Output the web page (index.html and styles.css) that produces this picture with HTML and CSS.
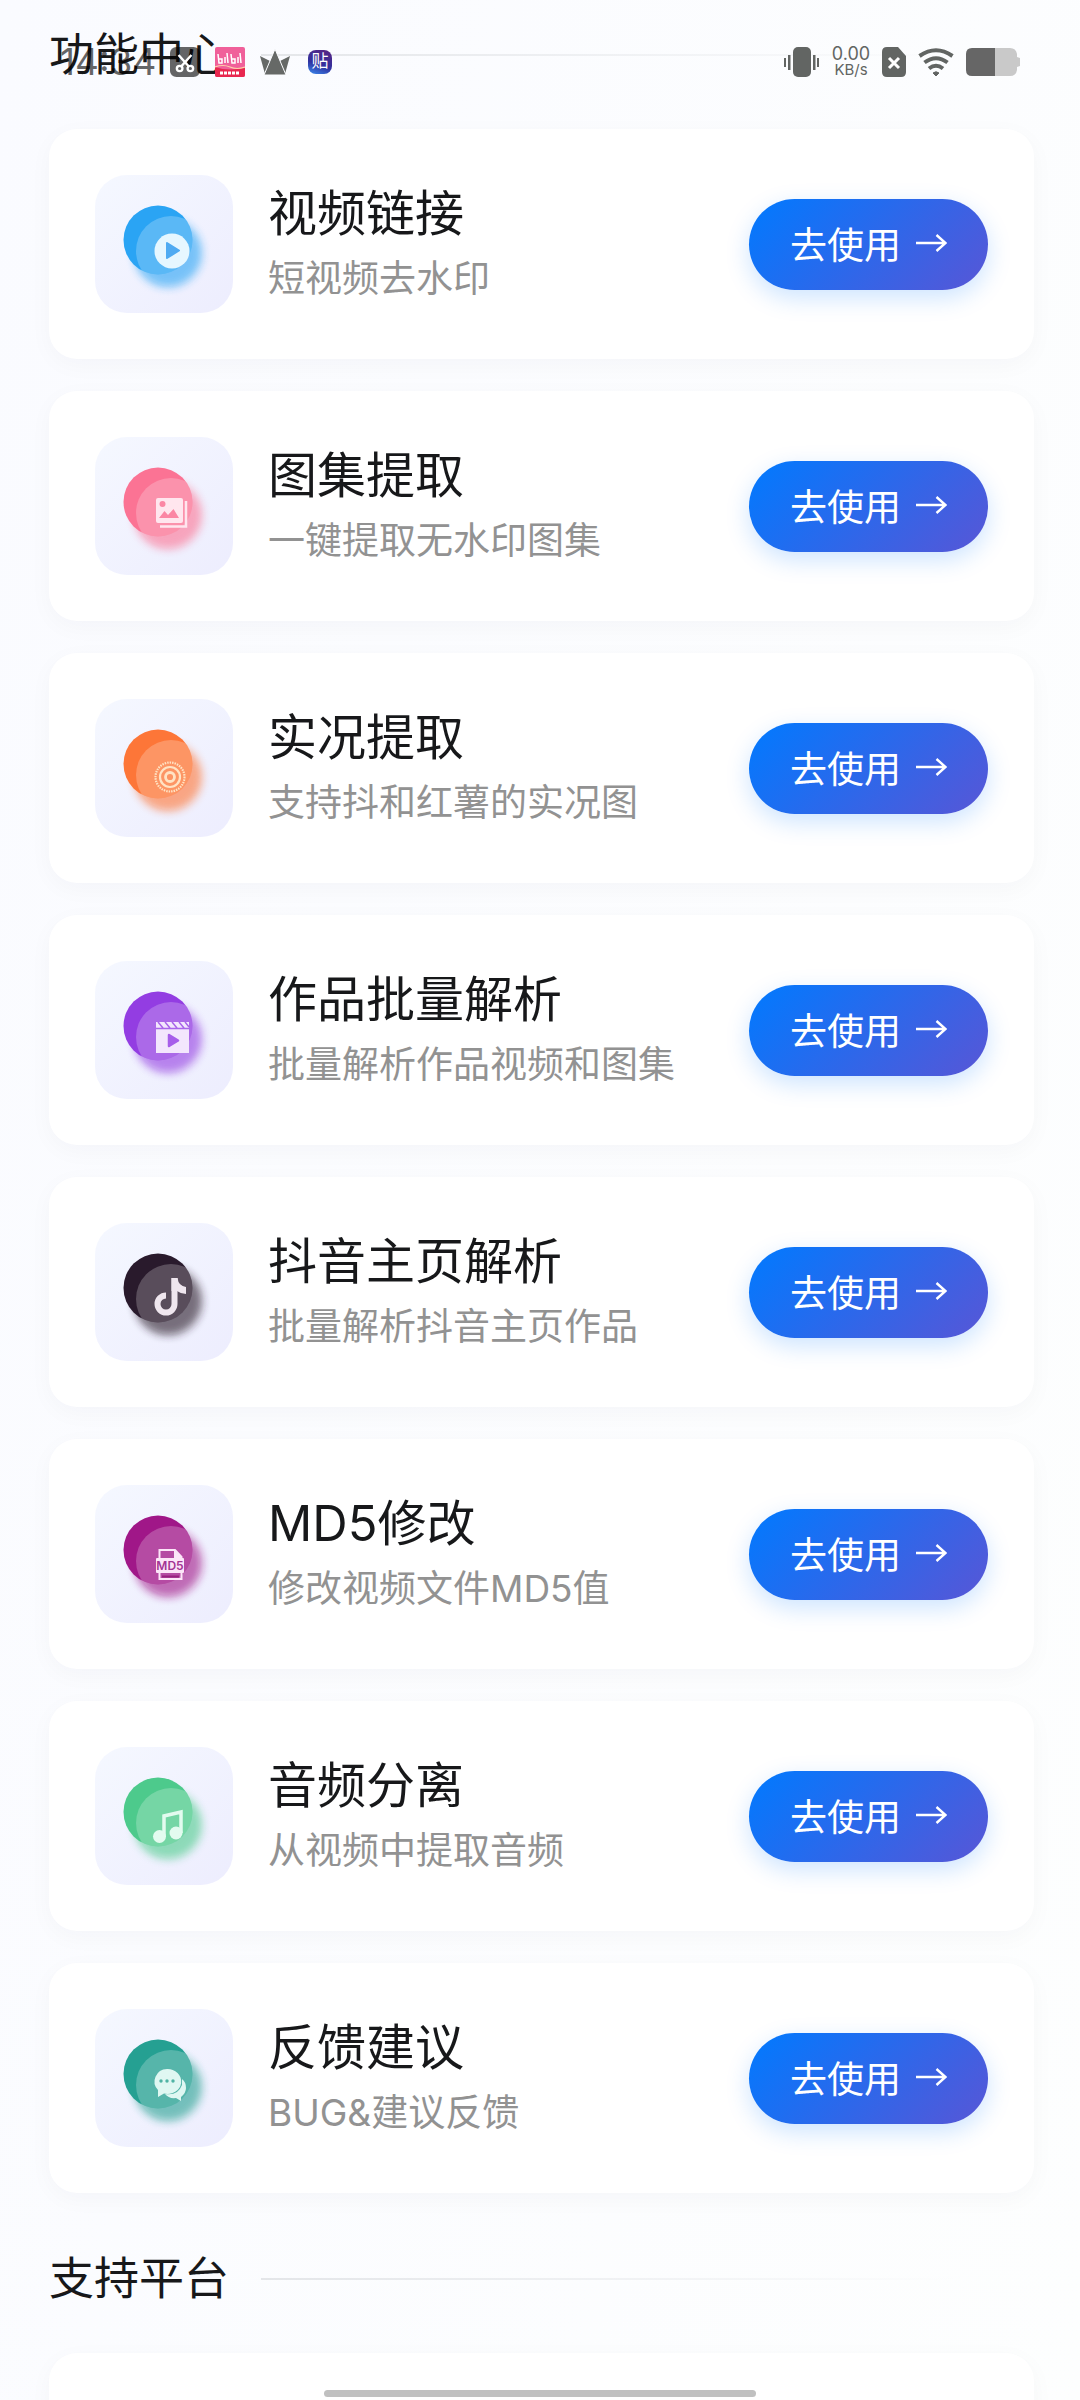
FILE: index.html
```html
<!DOCTYPE html>
<html lang="zh-CN">
  <head>
    <meta charset="UTF-8" />
    <meta name="viewport" content="width=device-width, initial-scale=1.0" />
    <title>功能中心</title>
    <link rel="stylesheet" href="styles.css">
  </head>
  <body>
    <!-- shared shapes -->
    <svg class="defs" width="0" height="0" aria-hidden="true">
      <defs>
        <filter id="soft" x="-50%" y="-50%" width="200%" height="200%">
          <feGaussianBlur stdDeviation="4" />
        </filter>
        <clipPath id="disc"><circle cx="63" cy="65" r="34.500" /></clipPath>
        <symbol id="blob" viewBox="0 0 138 138">
          <circle cx="73" cy="78" r="34" fill="currentColor" opacity="0.65" filter="url(#soft)" />
          <circle cx="63" cy="65" r="34.500" fill="currentColor" />
          <circle cx="76" cy="76" r="35" fill="#fff" opacity="0.06" />
          <circle cx="76" cy="76" r="35" fill="#fff" opacity="0.18" clip-path="url(#disc)" />
        </symbol>
        <symbol id="arrow" viewBox="0 0 32 20">
          <path d="M1 10H30M21.500 2L30.500 10L21.500 18" fill="none" stroke="#fff" stroke-width="2.400" />
        </symbol>
      </defs>
    </svg>

    <header class="status-bar">
      <div class="status-left">
        <span class="clock">14:34</span>
        <svg width="30" height="30" viewBox="0 0 28 30" preserveAspectRatio="none">
          <rect width="28" height="30" rx="6" fill="#000" opacity="0.6" />
          <g fill="none" stroke="#fff" stroke-width="2.200">
            <path d="M8 8L18 20M20 8L10 20" />
            <circle cx="9" cy="21.500" r="2.600" />
            <circle cx="19" cy="21.500" r="2.600" />
          </g>
        </svg>
        <svg width="30" height="30" viewBox="0 0 30 30">
          <rect width="30" height="30" rx="2" fill="#f0609a" />
          <path d="M0 20Q15 25 30 20V28Q30 30 28 30H2Q0 30 0 28Z" fill="#e8274f" />
          <g fill="none" stroke="#fff" stroke-width="1.500">
            <path d="M3 7L4 16H7V12H4M10 10V16M12 6L13 16M16 7L17 16H20V12H17M23 10V16M25 6L26 16" />
            <path d="M0 20Q8 17 15 20T30 20" stroke="#ffd0a8" stroke-width="1.200" />
            <path d="M5 26H25" stroke-width="3" stroke-dasharray="3 1" />
          </g>
        </svg>
        <svg class="crown" width="30" height="26" viewBox="0 0 30 26" fill="#666967">
          <path d="M0 7L10 12L5 25ZM30 7L20 12L25 25Z" />
          <path d="M15 0L26 26H4Z" stroke="#fbfcff" stroke-width="1" />
        </svg>
        <span class="tie">贴</span>
      </div>
      <div class="status-right">
        <svg width="36" height="30" viewBox="0 0 36 30" fill="#626563">
          <rect x="9" width="18" height="30" rx="5" />
          <path d="M0 11h2v9H0zM4 8h2.500v15H4zM29 8h2.500v15H29zM33 11h2v9h-2z" />
        </svg>
        <div class="speed"><span>0.00</span><span class="unit">KB/s</span></div>
        <svg width="24" height="30" viewBox="0 0 24 30">
          <path d="M5 0H16L24 9V25Q24 30 19 30H5Q0 30 0 25V5Q0 0 5 0Z" fill="#626563" />
          <path d="M7 11L17 21M17 11L7 21" stroke="#fff" stroke-width="3" />
        </svg>
        <svg width="36" height="30" viewBox="0 0 36 30" fill="none" stroke="#626563" stroke-width="4">
          <path d="M1.500 9Q18-2.500 34.500 9M6.500 15.500Q18 7 29.500 15.500M11 21.500Q18 16 25 21.500" />
          <path d="M15 26Q18 23.500 21 26L18 29Z" fill="#626563" stroke-width="1" />
        </svg>
        <svg width="54" height="28" viewBox="0 0 54 28">
          <path d="M28 0H44Q50 0 51 6V9L54 10V18L51 19V22Q50 28 44 28H28Z" fill="#c9c9c9" />
          <path d="M6 0H29V28H6Q0 28 0 22V6Q0 0 6 0Z" fill="#666" />
        </svg>
      </div>
    </header>

    <main class="page">
      <h2 class="section-title">功能中心</h2>

      <div class="list">
        <section class="card">
          <svg class="icon blue" viewBox="0 0 138 138">
            <use href="#blob" />
            <circle cx="77" cy="76" r="17.500" fill="#e6f7ff" />
            <path d="M72 68L84 75.500L72 83Z" fill="#4fabf2" stroke="#4fabf2" stroke-width="2" stroke-linejoin="round" />
          </svg>
          <div class="info">
            <h3>视频链接</h3>
            <p>短视频去水印</p>
          </div>
          <button class="btn" type="button">去使用 <svg class="arrow"><use href="#arrow" /></svg></button>
        </section>

        <section class="card">
          <svg class="icon pink" viewBox="0 0 138 138">
            <use href="#blob" />
            <path d="M91 64V89.500H65" fill="none" stroke="#ffe6ee" stroke-width="2.500" />
            <rect x="61" y="61" width="27" height="25" rx="2" fill="#ffe6ee" />
            <circle cx="67.500" cy="67" r="3" fill="#fb86a4" />
            <path d="M64 81L69.500 74L73 78L78.500 72L84 81Z" fill="#fb86a4" />
          </svg>
          <div class="info">
            <h3>图集提取</h3>
            <p>一键提取无水印图集</p>
          </div>
          <button class="btn" type="button">去使用 <svg class="arrow"><use href="#arrow" /></svg></button>
        </section>

        <section class="card">
          <svg class="icon orange" viewBox="0 0 138 138">
            <use href="#blob" />
            <g fill="none" stroke="#ffe3c4">
              <circle cx="75" cy="78" r="4.500" stroke-width="2.800" />
              <circle cx="75" cy="78" r="10" stroke-width="2.200" />
              <circle cx="75" cy="78" r="14.500" stroke-width="2.200" stroke-dasharray="1.500 1" />
            </g>
          </svg>
          <div class="info">
            <h3>实况提取</h3>
            <p>支持抖和红薯的实况图</p>
          </div>
          <button class="btn" type="button">去使用 <svg class="arrow"><use href="#arrow" /></svg></button>
        </section>

        <section class="card">
          <svg class="icon purple" viewBox="0 0 138 138">
            <use href="#blob" />
            <path d="M61 61H94V92H61Z" fill="#f3e6fd" />
            <path d="M61 67.500H94M63 61L68 67M70 61L75 67M77 61L82 67M84 61L89 67M90 61L94 66" stroke="#a964ea" stroke-width="1.500" />
            <path d="M74 74L83 79.500L74 85Z" fill="#a75eea" stroke="#a75eea" stroke-width="2.500" stroke-linejoin="round" />
          </svg>
          <div class="info">
            <h3>作品批量解析</h3>
            <p>批量解析作品视频和图集</p>
          </div>
          <button class="btn" type="button">去使用 <svg class="arrow"><use href="#arrow" /></svg></button>
        </section>

        <section class="card">
          <svg class="icon dark" viewBox="0 0 138 138">
            <use href="#blob" />
            <path d="M79.500 55V81A8.500 8.500 0 1 1 71 72.500" fill="none" stroke="#efe6ee" stroke-width="6" />
            <path d="M76.500 55H82.500Q83.500 63 91 64V71Q86 71 82 68H76.500Z" fill="#efe6ee" />
          </svg>
          <div class="info">
            <h3>抖音主页解析</h3>
            <p>批量解析抖音主页作品</p>
          </div>
          <button class="btn" type="button">去使用 <svg class="arrow"><use href="#arrow" /></svg></button>
        </section>

        <section class="card">
          <svg class="icon magenta" viewBox="0 0 138 138">
            <use href="#blob" />
            <path d="M64.500 74V65H80L86.500 72V94H64.500V86" fill="none" stroke="#fce6f8" stroke-width="2" />
            <path d="M79 65V73H87Z" fill="#fce6f8" />
            <rect x="61" y="73" width="28" height="15" rx="1" fill="#fce6f8" />
            <path d="M67 91.500H84" stroke="#97207f" stroke-width="2" />
            <text class="md5" x="75" y="85" text-anchor="middle">MD5</text>
          </svg>
          <div class="info">
            <h3>MD5修改</h3>
            <p>修改视频文件MD5值</p>
          </div>
          <button class="btn" type="button">去使用 <svg class="arrow"><use href="#arrow" /></svg></button>
        </section>

        <section class="card">
          <svg class="icon green" viewBox="0 0 138 138">
            <use href="#blob" />
            <path d="M69 90V69L86 65V86" fill="none" stroke="#e3fbef" stroke-width="3.500" />
            <circle cx="64.500" cy="89.500" r="6.500" fill="#e3fbef" />
            <circle cx="81" cy="86" r="6.500" fill="#e3fbef" />
          </svg>
          <div class="info">
            <h3>音频分离</h3>
            <p>从视频中提取音频</p>
          </div>
          <button class="btn" type="button">去使用 <svg class="arrow"><use href="#arrow" /></svg></button>
        </section>

        <section class="card">
          <svg class="icon teal" viewBox="0 0 138 138">
            <use href="#blob" />
            <path d="M87 70Q91 73 91 79Q91 84 86 88V92L81 89Q74 90 70 85Q83 87 87 76Z" fill="#dff7f2" />
            <path d="M72 60A13.500 12.500 0 1 1 69 84.500L63 88V81A13 12.500 0 0 1 72 60Z" fill="#dff7f2" />
            <g fill="#4fb3a4">
              <circle cx="66" cy="72" r="1.700" />
              <circle cx="72" cy="72" r="1.700" />
              <circle cx="78" cy="72" r="1.700" />
            </g>
          </svg>
          <div class="info">
            <h3>反馈建议</h3>
            <p>BUG&amp;建议反馈</p>
          </div>
          <button class="btn" type="button">去使用 <svg class="arrow"><use href="#arrow" /></svg></button>
        </section>
      </div>

      <h2 class="section-title next">支持平台</h2>
      <section class="card platforms"></section>
    </main>

    <div class="home-indicator"></div>
  </body>
</html>
```
FILE: styles.css
```css
* {
  box-sizing: border-box;
}

body {
  margin: 0;
  height: 100vh;
  overflow: hidden;
  position: relative;
  font-family: Inter, "Noto Sans CJK SC", sans-serif;
  color: #17181a;
  background: linear-gradient(100deg, #fafbff, #fdfefe);
}

.defs {
  position: absolute;
}

h2,
h3,
p {
  margin: 0;
  font-weight: 400;
}

/* status bar */
.status-bar {
  position: absolute;
  top: 0;
  left: 0;
  right: 0;
  z-index: 2;
  height: 123px;
  padding: 0 60px;
  display: flex;
  justify-content: space-between;
  align-items: center;
}

.status-left,
.status-right {
  display: flex;
  align-items: center;
  gap: 12px;
}

.status-left {
  gap: 15px;
}

.clock {
  width: 95px;
  font-size: 37px;
  line-height: 40px;
  color: rgba(0, 0, 0, 0.6);
  white-space: nowrap;
}

.crown {
  margin-right: 3px;
}

.tie {
  width: 24px;
  height: 24px;
  border-radius: 8px;
  background: linear-gradient(200deg, #5a2380, #3032a0 60%, #3b8cf0);
  color: #fff;
  font-size: 17px;
  line-height: 23px;
  text-align: center;
}

.speed {
  width: 38px;
  display: flex;
  flex-direction: column;
  align-items: center;
  font-size: 18px;
  line-height: 16px;
  color: #626563;
}

.unit {
  font-size: 15px;
}

/* sections */
.page {
  padding: 21px 46px 0 49px;
}

.section-title {
  display: flex;
  align-items: center;
  gap: 32px;
  margin-bottom: 40px;
  font-size: 45px;
  line-height: 68px;
}

.section-title::after {
  content: "";
  flex: 1;
  height: 2px;
  background: linear-gradient(90deg, #e4e6e9, rgba(228, 230, 233, 0) 90%);
}

.next {
  margin-top: 52px;
}

.list {
  display: flex;
  flex-direction: column;
  gap: 32px;
}

.card {
  display: flex;
  align-items: center;
  padding: 46px;
  border-radius: 28px;
  background: #fff;
  box-shadow: 0 6px 24px rgba(30, 40, 60, 0.03);
}

.icon {
  flex: none;
  width: 138px;
  height: 138px;
  border-radius: 32px;
  background: linear-gradient(135deg, #f5f8ff, #ededfe);
}

.blue { color: #2aa4f4; }
.pink { color: #fb7394; }
.orange { color: #fd7638; }
.purple { color: #933de2; }
.dark { color: #291a2c; }
.magenta { color: #a01788; }
.green { color: #4dca8c; }
.teal { color: #25a092; }

.md5 {
  font-size: 12px;
  font-weight: 600;
  fill: #a33594;
}

.info {
  flex: 1;
  margin-left: 35px;
}

.info h3 {
  margin-bottom: 4px;
  font-size: 49px;
  line-height: 66px;
}

.info p {
  font-size: 37px;
  line-height: 56px;
  color: #929292;
}

.btn {
  display: flex;
  align-items: center;
  gap: 14px;
  height: 91px;
  padding: 0 41px 3px;
  border: 0;
  border-radius: 46px;
  background: linear-gradient(135deg, #007aff, #5856d6);
  box-shadow: 0 8px 24px rgba(0, 122, 255, 0.2);
  color: #fff;
  font-family: inherit;
  font-size: 37px;
  white-space: nowrap;
}

.arrow {
  width: 32px;
  height: 20px;
}

.platforms {
  padding: 92px 46px;
}

.home-indicator {
  position: absolute;
  left: 30%;
  right: 30%;
  bottom: 3px;
  height: 7px;
  border-radius: 4px;
  background: #c0c0c0;
}
```
